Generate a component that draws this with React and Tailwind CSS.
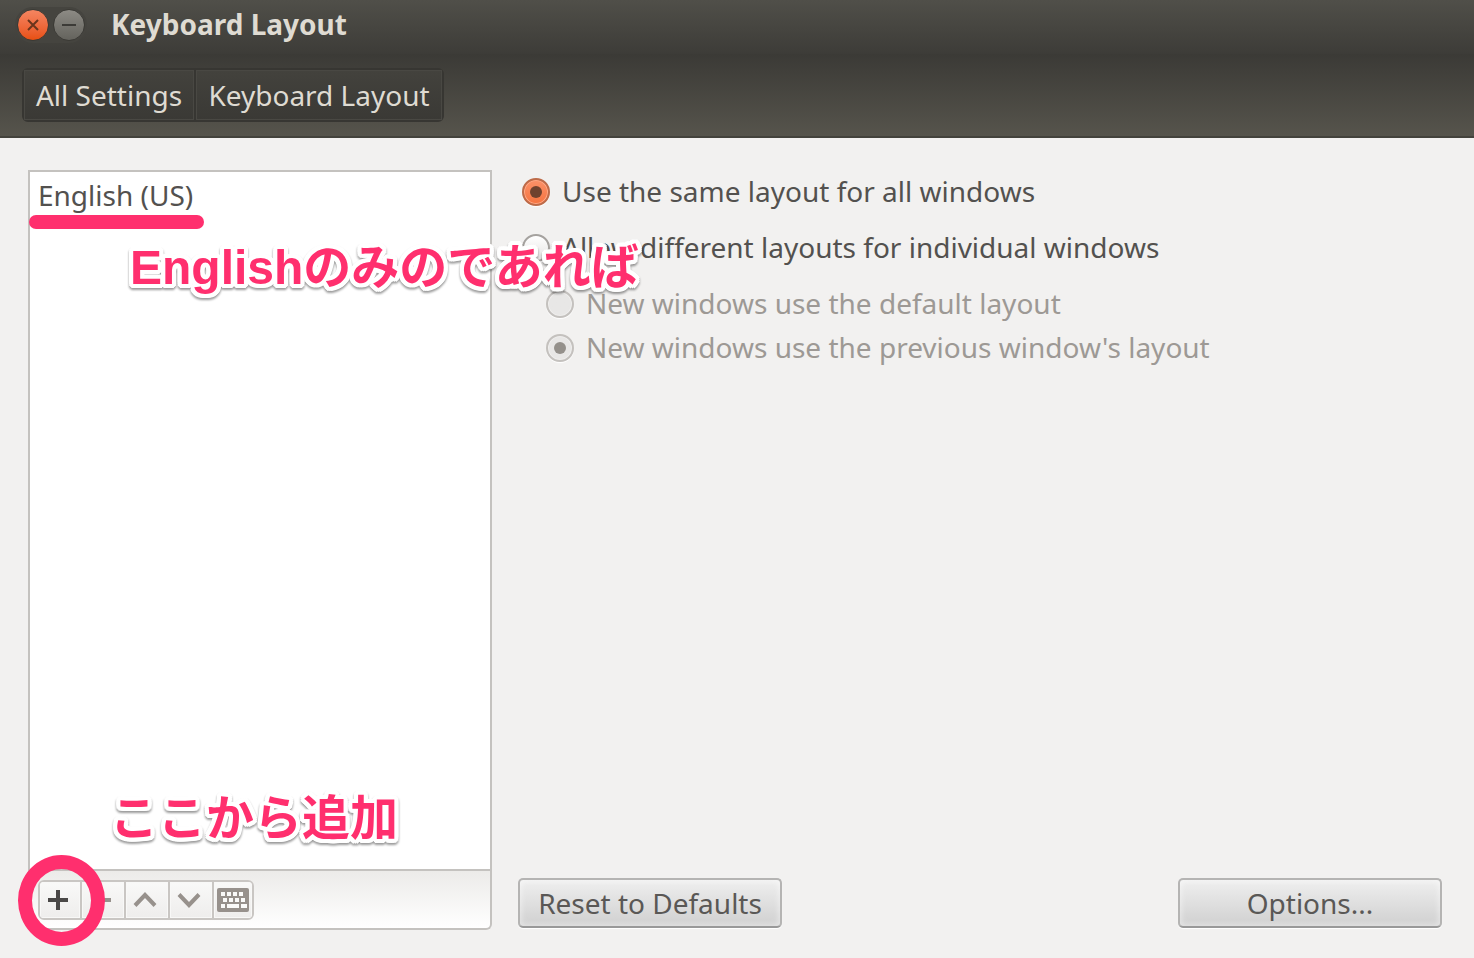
import React from "react";

const NOTE =
  "pointer-events-none absolute whitespace-nowrap text-[48px] leading-[56px] text-[#ff2f6e] [text-shadow:4px_0_white,-4px_0_white,0_4px_white,0_-4px_white,3px_3px_white,-3px_3px_white,3px_-3px_white,-3px_-3px_white,4px_2px_white,-4px_2px_white,4px_-2px_white,-4px_-2px_white,2px_4px_white,-2px_4px_white,2px_-4px_white,-2px_-4px_white,2px_0_white,-2px_0_white,0_2px_white,0_-2px_white] drop-shadow-[0_2px_1px_rgba(0,0,0,0.4)]";

function RadioRow({ id, name, label, checked, disabled }) {
  return (
    <div className="flex h-8 items-center gap-3">
      <span className="grid size-7 shrink-0 place-items-center">
        <input
          id={id}
          name={name}
          type="radio"
          defaultChecked={checked}
          disabled={disabled}
          className="peer col-start-1 row-start-1 size-7 appearance-none rounded-full border-2 border-[#a5a29f] bg-linear-to-b from-white to-[#e4e3e2] shadow-[0_1px_1px_white] checked:border-[#bd6b49] checked:from-[#fb9168] checked:to-[#f6743f] checked:shadow-[inset_0_0_0_1px_#ffa987,0_1px_1px_white] disabled:border-[#c4c1be] disabled:from-[#e8e7e6] disabled:to-[#e8e7e6] disabled:shadow-[inset_0_0_0_1px_#efeeed,0_1px_1px_white]"
        />
        <span className="pointer-events-none col-start-1 row-start-1 hidden size-3 rounded-full bg-[#70422e] peer-checked:block peer-disabled:bg-[#94908b]" />
      </span>
      <label
        htmlFor={id}
        className={
          disabled
            ? "pb-0.5 whitespace-nowrap text-[#9d9995]"
            : "pb-0.5 whitespace-nowrap text-[#53514f]"
        }
      >
        {label}
      </label>
    </div>
  );
}

function ToolButton({ label, disabled, className = "", children }) {
  return (
    <button
      type="button"
      aria-label={label}
      disabled={disabled}
      className={`flex h-9 items-center justify-center border-[#c9c6c3] bg-linear-to-b from-[#f9f9f8] to-[#eeedec] text-[#97918c] shadow-[inset_0_0_0_1px_#f8f8f7] ${className}`}
    >
      {children}
    </button>
  );
}

function PushButton({ className, children }) {
  return (
    <button
      type="button"
      className={`h-[50px] whitespace-nowrap rounded-[5px] border-2 border-[#b5b4b3] border-b-[#999] bg-linear-to-b from-[#efefef] to-[#d0d0d0] px-3.5 text-[#5a5856] shadow-[inset_0_0_6px_1px_rgba(255,255,255,0.5),0_1px_1px_white] ${className}`}
    >
      {children}
    </button>
  );
}

function Keyboard() {
  return (
    <svg width="32" height="26" viewBox="0 0 32 26" aria-hidden="true">
      <rect x="0" y="1" width="32" height="24" rx="2" fill="#97918c" />
      <g fill="#fafaf9">
        <rect x="4" y="5" width="4" height="4" />
        <rect x="10" y="5" width="4" height="4" />
        <rect x="16" y="5" width="4" height="4" />
        <rect x="22" y="5" width="4" height="4" />
        <rect x="6" y="11" width="4" height="4" />
        <rect x="12" y="11" width="4" height="4" />
        <rect x="18" y="11" width="4" height="4" />
        <rect x="24" y="11" width="4" height="4" />
        <rect x="4" y="17" width="4" height="4" />
        <rect x="10" y="17" width="12" height="4" />
        <rect x="24" y="17" width="6" height="4" />
      </g>
    </svg>
  );
}

export default function App() {
  return (
    <div className="flex min-h-screen flex-col bg-[#f2f1f0] font-['Noto_Sans',sans-serif] text-[28px] leading-8">
      <header className="text-[#dfdbd2]">
        <div className="flex h-[54px] items-center bg-linear-to-b from-[#504f49] to-[#3d3c38] pr-4 pb-1 pl-[15px]">
          <div className="flex gap-1 rounded-full bg-[#45443f] p-0.5">
            <button
              type="button"
              aria-label="Close"
              className="grid size-8 place-items-center rounded-full border border-[#3a3935] bg-linear-to-b from-[#f48560] to-[#e84f0e]"
            >
              <svg width="12" height="12" viewBox="0 0 12 12" aria-hidden="true">
                <path d="M1 1l10 10M11 1L1 11" stroke="#6b341c" strokeWidth="2" />
              </svg>
            </button>
            <button
              type="button"
              aria-label="Minimize"
              className="grid size-8 place-items-center rounded-full border border-[#3a3935] bg-linear-to-b from-[#8d8b85] to-[#64635d]"
            >
              <svg width="14" height="2" viewBox="0 0 14 2" aria-hidden="true">
                <rect width="14" height="2" fill="#3c3b37" />
              </svg>
            </button>
          </div>
          <h1 className="ml-6 pb-0.5 text-[28px] font-bold">Keyboard Layout</h1>
        </div>
        <div className="flex h-[84px] items-center border-b-2 border-[#43423c] bg-linear-to-b from-[#3b3a36] to-[#56544c] px-[22px]">
          <nav className="flex h-[54px] rounded-md border-2 border-[#373632] bg-linear-to-b from-[#43423d] to-[#3a3935] whitespace-nowrap">
            <a
              href="#all"
              className="flex min-w-[172px] items-center justify-center border-r-2 border-[#373632] px-2 shadow-[inset_0_0_0_1px_#494843]"
            >
              All Settings
            </a>
            <a
              href="#layout"
              className="flex min-w-[246px] items-center justify-center px-2 shadow-[inset_0_0_0_1px_#494843]"
            >
              Keyboard Layout
            </a>
          </nav>
        </div>
      </header>

      <main className="grid flex-1 grid-cols-[464px_1fr] gap-[26px] pt-8 pr-8 pb-7 pl-7">
        <section aria-label="Layouts" className="relative flex flex-col">
          <ul className="flex-1 border-2 border-[#c4c2bf] bg-white px-2 pt-[7px] text-[#53514f]">
            <li>English (US)</li>
          </ul>
          <div className="flex h-[59px] items-center rounded-b-md border-2 border-t-0 border-[#c4c2bf] bg-linear-to-b from-[#ecebe9] to-white pl-2">
            <div className="flex overflow-hidden rounded-md border-2 border-[#c9c6c3]">
              <ToolButton label="Add layout" className="w-[42px] border-r-2 pr-1">
                <svg width="20" height="20" viewBox="0 0 20 20" aria-hidden="true">
                  <path d="M10 0v20M0 10h20" stroke="#4a4847" strokeWidth="4" />
                </svg>
              </ToolButton>
              <ToolButton label="Remove layout" disabled className="w-11 border-r-2 pr-1">
                <svg width="20" height="4" viewBox="0 0 20 4" aria-hidden="true">
                  <rect width="20" height="4" fill="currentColor" />
                </svg>
              </ToolButton>
              <ToolButton label="Move up" disabled className="w-11 border-r-2 pr-1">
                <svg width="24" height="16" viewBox="0 0 24 16" fill="none" aria-hidden="true">
                  <path d="M2 13.5L12 3l10 10.5" stroke="currentColor" strokeWidth="4" />
                </svg>
              </ToolButton>
              <ToolButton label="Move down" disabled className="w-11 border-r-2 pr-1">
                <svg width="24" height="16" viewBox="0 0 24 16" fill="none" aria-hidden="true">
                  <path d="M2 2.5L12 13L22 2.5" stroke="currentColor" strokeWidth="4" />
                </svg>
              </ToolButton>
              <ToolButton label="Show keyboard" disabled className="w-[38px]">
                <Keyboard />
              </ToolButton>
            </div>
          </div>

          <div className="pointer-events-none absolute top-[45px] left-px h-3.5 w-[175px] rounded-full bg-[#ff2f6e]" />
          <p
            className={`${NOTE} top-[70px] left-[102px] z-10 font-['Liberation_Sans','Noto_Sans_CJK_JP',sans-serif] font-bold`}
          >
            Englishのみのであれば
          </p>
          <p
            className={`${NOTE} bottom-[88px] left-[82px] font-['Noto_Sans_CJK_JP',sans-serif] font-bold`}
          >
            ここから追加
          </p>
          <div className="pointer-events-none absolute -bottom-4 -left-2.5 h-[91px] w-[87px] rounded-[50%] border-[14px] border-[#ff2f6e]" />
        </section>

        <section className="flex flex-col justify-between">
          <div className="flex flex-col gap-6 pt-1.5 pl-1">
            <RadioRow id="same" name="scope" label="Use the same layout for all windows" checked />
            <RadioRow id="different" name="scope" label="Allow different layouts for individual windows" />
            <div className="flex flex-col gap-3 pl-6">
              <RadioRow id="default" name="initial" label="New windows use the default layout" disabled />
              <RadioRow id="previous" name="initial" label="New windows use the previous window's layout" checked disabled />
            </div>
          </div>
          <div className="flex justify-between pb-0.5">
            <PushButton className="min-w-[264px]">Reset to Defaults</PushButton>
            <PushButton className="w-[264px]">Options...</PushButton>
          </div>
        </section>
      </main>
    </div>
  );
}
